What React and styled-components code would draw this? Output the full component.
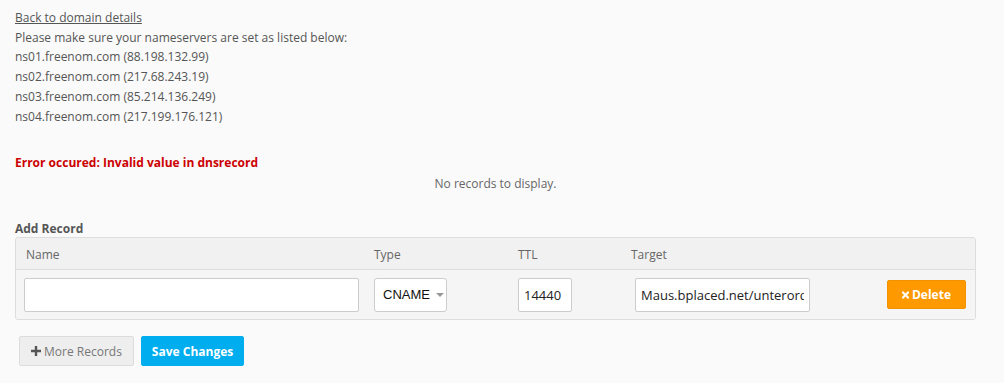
import React from "react";
import styled, { createGlobalStyle } from "styled-components";

const GlobalStyle = createGlobalStyle`
  body {
    margin: 0;
    background: #fafafa;
    font-family: "Open Sans", "DejaVu Sans", sans-serif;
    font-size: 12px;
    color: #555;
  }
`;

const Page = styled.div`
  box-sizing: border-box;
  width: 976px;
  padding: 8px 0 0 15px;
`;

const BackLink = styled.a`
  display: block;
  color: #555;
  text-decoration: underline;
  line-height: 19.7px;
`;

const Line = styled.div`
  line-height: 19.7px;
`;

const ErrorText = styled.div`
  margin-top: 27px;
  color: #cc0000;
  font-weight: 700;
  line-height: 20px;
`;

const Empty = styled.div`
  text-align: center;
  color: #666;
  line-height: 20px;
  margin-top: 1px;
`;

const SectionTitle = styled.div`
  margin-top: 27px;
  font-weight: 700;
  line-height: 16px;
`;

const Table = styled.div`
  border: 1px solid #ddd;
  border-radius: 3px;
  background: #f5f5f5;
  overflow: hidden;
`;

const Row = styled.div`
  display: grid;
  grid-template-columns: 350px 144px 113px 253px 1fr;
  align-items: center;
  padding-left: 8px;
  height: ${(p) => (p.$head ? "31px" : "49px")};
  background: ${(p) => (p.$head ? "#f1f1f1" : "#f5f5f5")};
  border-bottom: ${(p) => (p.$head ? "1px solid #ddd" : "none")};
`;

const HeadCell = styled.div`
  padding-left: ${(p) => p.$pad || 0}px;
  color: #666;
  padding-top: 2px;
`;

const Cell = styled.div`
  padding-left: ${(p) => p.$pad || 0}px;
  display: flex;
  align-items: center;
`;

const TextInput = styled.input`
  box-sizing: border-box;
  width: ${(p) => p.$w}px;
  height: 34px;
  border: 1px solid #ccc;
  border-radius: 2px;
  background: #fff;
  padding: 0 5px;
  font-family: "Open Sans", sans-serif;
  font-size: 13px;
  color: #222;
  outline: none;
`;

const Select = styled.div`
  box-sizing: border-box;
  width: 73px;
  height: 34px;
  border: 1px solid #ccc;
  border-radius: 3px;
  background: #fff;
  display: flex;
  align-items: center;
  padding-left: 8px;
  gap: 6px;
  font-family: "Liberation Sans", Arial, sans-serif;
  font-size: 13px;
  color: #111;
`;

const Caret = styled.span`
  width: 0;
  height: 0;
  border-left: 4px solid transparent;
  border-right: 4px solid transparent;
  border-top: 4px solid #999;
  margin-top: 1px;
`;

const Button = styled.button`
  box-sizing: border-box;
  height: ${(p) => p.$h || 30}px;
  width: ${(p) => (p.$w ? `${p.$w}px` : "auto")};
  padding: 0 ${(p) => p.$px ?? 12}px;
  border-radius: 2px;
  font-family: "Open Sans", sans-serif;
  font-size: 12px;
  display: inline-flex;
  align-items: center;
  justify-content: center;
  gap: 3px;
  cursor: pointer;
  border: 1px solid ${(p) => p.$border};
  background: ${(p) => p.$bg};
  color: ${(p) => p.$color};
  font-weight: ${(p) => (p.$bold ? 700 : 400)};
`;

const Actions = styled.div`
  display: flex;
  gap: 7px;
  margin: 16px 0 0 4px;
`;

const Plus = () => (
  <svg width="10" height="10" viewBox="0 0 10 10">
    <path d="M3.8 0h2.4v3.8H10v2.4H6.2V10H3.8V6.2H0V3.8h3.8z" fill="#555" />
  </svg>
);

const Cross = () => (
  <svg width="7" height="8" viewBox="0 0 7 8">
    <path d="M1 1.5l5 5M6 1.5l-5 5" stroke="#fff" strokeWidth="2" strokeLinecap="square" />
  </svg>
);

export default function App() {
  return (
    <>
      <GlobalStyle />
      <Page>
        <BackLink href="#">Back to domain details</BackLink>
        <Line>Please make sure your nameservers are set as listed below:</Line>
        <Line>ns01.freenom.com (88.198.132.99)</Line>
        <Line>ns02.freenom.com (217.68.243.19)</Line>
        <Line>ns03.freenom.com (85.214.136.249)</Line>
        <Line>ns04.freenom.com (217.199.176.121)</Line>

        <ErrorText>Error occured: Invalid value in dnsrecord</ErrorText>
        <Empty>No records to display.</Empty>

        <SectionTitle>Add Record</SectionTitle>
        <Table>
          <Row $head>
            <HeadCell $pad={2}>Name</HeadCell>
            <HeadCell>Type</HeadCell>
            <HeadCell>TTL</HeadCell>
            <HeadCell>Target</HeadCell>
            <HeadCell />
          </Row>
          <Row>
            <Cell>
              <TextInput $w={335} />
            </Cell>
            <Cell>
              <Select>
                CNAME <Caret />
              </Select>
            </Cell>
            <Cell>
              <TextInput $w={54} defaultValue="14440" />
            </Cell>
            <Cell $pad={4}>
              <TextInput $w={175} defaultValue="Maus.bplaced.net/unterordner" />
            </Cell>
            <Cell $pad={3}>
              <Button $h={29} $px={0} $w={79} $bg="#ff9900" $border="#f39200" $color="#fff" $bold>
                <Cross /> Delete
              </Button>
            </Cell>
          </Row>
        </Table>

        <Actions>
          <Button $bg="#eeeeee" $border="#dcdcdc" $color="#777" $px={11}>
            <Plus /> More Records
          </Button>
          <Button $bg="#00aeef" $border="#00aeef" $color="#fff" $bold $px={10}>
            Save Changes
          </Button>
        </Actions>
      </Page>
    </>
  );
}
